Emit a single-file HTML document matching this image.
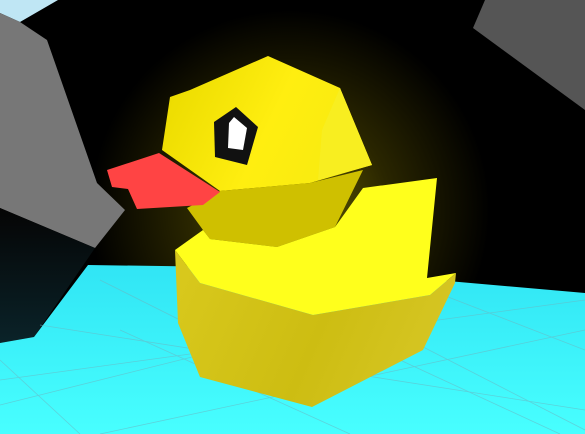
<!DOCTYPE html>
<html><head><meta charset="utf-8"><style>
html,body{margin:0;padding:0;background:#000;overflow:hidden}
svg{display:block}
</style></head><body>
<svg width="585" height="434" viewBox="0 0 585 434" xmlns="http://www.w3.org/2000/svg">
<defs>
<radialGradient id="glow" cx="290" cy="210" r="200" gradientUnits="userSpaceOnUse">
<stop offset="0" stop-color="#6a6400"/>
<stop offset="0.5" stop-color="#2a2600"/>
<stop offset="1" stop-color="#000"/>
</radialGradient>
<linearGradient id="floor" x1="0" y1="260" x2="0" y2="434" gradientUnits="userSpaceOnUse">
<stop offset="0" stop-color="#30e4f4"/>
<stop offset="1" stop-color="#48ffff"/>
</linearGradient>
<linearGradient id="dark" x1="0" y1="210" x2="0" y2="340" gradientUnits="userSpaceOnUse">
<stop offset="0" stop-color="#050505"/>
<stop offset="1" stop-color="#0a2228"/>
</linearGradient>
<linearGradient id="head" x1="170" y1="90" x2="360" y2="180" gradientUnits="userSpaceOnUse">
<stop offset="0" stop-color="#ecdc00"/>
<stop offset="0.5" stop-color="#ffee10"/>
<stop offset="1" stop-color="#f6ea10"/>
</linearGradient>
<linearGradient id="lower" x1="180" y1="280" x2="450" y2="400" gradientUnits="userSpaceOnUse">
<stop offset="0" stop-color="#d8c81c"/>
<stop offset="0.5" stop-color="#cdbd12"/>
<stop offset="1" stop-color="#d8c828"/>
</linearGradient>
</defs>
<rect width="585" height="434" fill="#000"/>
<rect width="585" height="434" fill="url(#glow)"/>
<polygon points="0,0 58,0 20,22 0,13" fill="#bfe6f4"/>
<polygon points="0,13 20,22 47,40 97,183 125,210 95,248 0,208" fill="#777"/>
<polygon points="0,208 95,248 34,337 0,343" fill="url(#dark)"/>
<polygon points="485,0 585,0 585,110 473,28" fill="#555"/>
<polygon points="88,265 300,268 585,293 585,434 0,434 0,343 34,337" fill="url(#floor)"/>
<g stroke="#6ab8c4" stroke-width="0.8" opacity="0.6" fill="none">
<line x1="40" y1="325" x2="585" y2="410"/>
<line x1="0" y1="380" x2="585" y2="300"/>
<line x1="0" y1="405" x2="300" y2="330"/>
<line x1="100" y1="434" x2="585" y2="330"/>
<line x1="430" y1="290" x2="585" y2="350"/>
<line x1="390" y1="330" x2="585" y2="430"/>
<line x1="120" y1="330" x2="350" y2="434"/>
<line x1="0" y1="360" x2="80" y2="434"/>
<line x1="100" y1="280" x2="200" y2="330"/>
<line x1="400" y1="360" x2="560" y2="434"/>
</g>
<polygon points="268,56 340,88 372,165 310,183 220,191 162,150 170,97 190,90" fill="url(#head)"/>
<polygon points="340,88 372,165 318,180 322,130" fill="#f8ee20"/>
<polygon points="220,191 310,183 363,170 335,227 277,247 210,239 203,230 187,208" fill="#cfc000"/>
<polygon points="107,170 159,153 220,192 203,205 137,209 128,189 112,187" fill="#ff4444"/>
<polygon points="236,107 258,127 247,165 215,157 214,122" fill="#111"/>
<polygon points="234,117 247,128 243,150 228,148 229,123" fill="#fff"/>
<polygon points="175,250 203,230 210,239 277,247 335,227 363,188 437,178 427,278 456,273 430,295 313,315 200,283" fill="#ffff1c"/>
<polygon points="175,250 200,283 313,315 430,295 456,273 455,283 423,350 312,407 200,377 178,323" fill="url(#lower)"/>
</svg>
</body></html>
